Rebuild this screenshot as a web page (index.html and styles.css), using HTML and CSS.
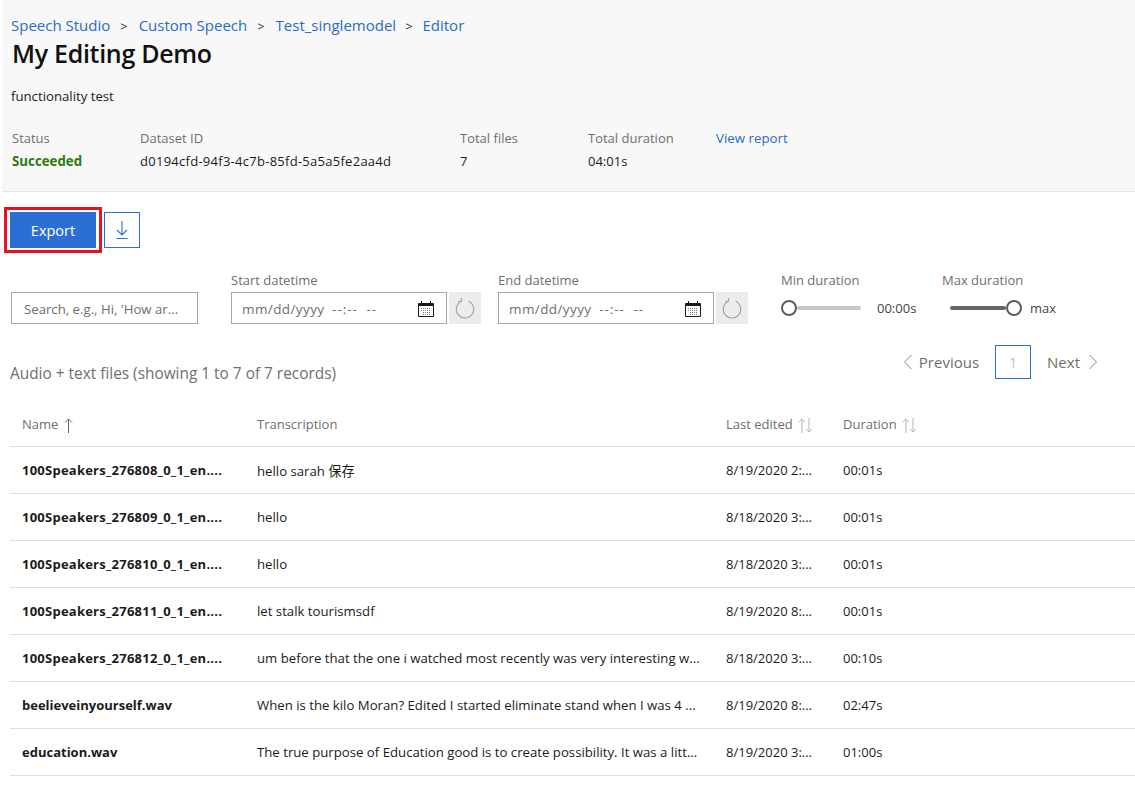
FILE: index.html
```html
<!DOCTYPE html>
<html lang="en">
<head>
  <meta charset="UTF-8">
  <title>My Editing Demo</title>
  <link rel="stylesheet" href="styles.css">
</head>
<body>

<!-- Dataset header -->
<header class="head">
  <nav class="crumbs">
    <a href="#">Speech Studio</a><span class="sep">&gt;</span>
    <a href="#">Custom Speech</a><span class="sep">&gt;</span>
    <a href="#">Test_singlemodel</a><span class="sep last">&gt;</span>
    <a href="#">Editor</a>
  </nav>
  <h1>My Editing Demo</h1>
  <p class="desc">functionality test</p>
  <div class="stats">
    <div class="stat s1"><span class="lbl">Status</span><span class="ok">Succeeded</span></div>
    <div class="stat s2"><span class="lbl">Dataset ID</span><span class="mono-ish">d0194cfd-94f3-4c7b-85fd-5a5a5fe2aa4d</span></div>
    <div class="stat s3"><span class="lbl">Total files</span><span>7</span></div>
    <div class="stat s4"><span class="lbl">Total duration</span><span>04:01s</span></div>
    <div class="stat"><a class="report" href="#">View report</a></div>
  </div>
</header>

<!-- Actions -->
<div class="actions">
  <div class="highlight"><button class="export">Export</button></div>
  <button class="download" aria-label="Download">
    <svg width="16" height="20" viewBox="0 0 16 20" fill="none" stroke="#2b6fd4" stroke-width="1.100"><path d="M8 1V15M3 10l5 5 5-5M2.500 18.500h11"/></svg>
  </button>
</div>

<!-- Filters -->
<div class="filters">
  <div class="search">Search, e.g., Hi, 'How ar...</div>
  <div class="field start">
    <label>Start datetime</label>
    <div class="date-row">
      <div class="date"><span>mm/dd/yyyy&nbsp; <span class="time">--:--&nbsp; --</span></span>
        <svg class="cal" width="18" height="17" viewBox="0 0 18 17" fill="none" stroke="#1a1a1a"><path d="M1.500 3.500h15v13h-15z"/><path d="M2 5h14" stroke-width="2"/><path d="M4.500 1v3M13.500 1v3"/><path d="M4 8.500h10M4 10.500h10M6 12.500h8M6 14.500h8" stroke="#777" stroke-dasharray="1 1"/></svg>
      </div>
      <button class="reset" aria-label="Reset"><svg width="22" height="22" viewBox="0 0 22 22" fill="none" stroke="#a6a6a6" stroke-width="1.200"><path d="M7.500 4.300A8.700 8.700 0 1 0 14.500 4.300M7.500 1v3.500H4"/></svg></button>
    </div>
  </div>
  <div class="field end">
    <label>End datetime</label>
    <div class="date-row">
      <div class="date"><span>mm/dd/yyyy&nbsp; <span class="time">--:--&nbsp; --</span></span>
        <svg class="cal" width="18" height="17" viewBox="0 0 18 17" fill="none" stroke="#1a1a1a"><path d="M1.500 3.500h15v13h-15z"/><path d="M2 5h14" stroke-width="2"/><path d="M4.500 1v3M13.500 1v3"/><path d="M4 8.500h10M4 10.500h10M6 12.500h8M6 14.500h8" stroke="#777" stroke-dasharray="1 1"/></svg>
      </div>
      <button class="reset" aria-label="Reset"><svg width="22" height="22" viewBox="0 0 22 22" fill="none" stroke="#a6a6a6" stroke-width="1.200"><path d="M7.500 4.300A8.700 8.700 0 1 0 14.500 4.300M7.500 1v3.500H4"/></svg></button>
    </div>
  </div>
  <div class="field min">
    <label>Min duration</label>
    <div class="slider-row">
      <div class="slider"><i class="thumb"></i><i class="track"></i></div>
      <span class="val">00:00s</span>
    </div>
  </div>
  <div class="field max">
    <label>Max duration</label>
    <div class="slider-row">
      <div class="slider right"><i class="track dark"></i><i class="thumb"></i></div>
      <span class="val">max</span>
    </div>
  </div>
</div>

<!-- Table title and paging -->
<div class="list-head">
  <h2>Audio + text files (showing 1 to 7 of 7 records)</h2>
  <div class="pager">
    <svg width="10" height="16" viewBox="0 0 10 16" fill="none" stroke="#8a8a8a"><path d="M8.500 1 1.500 8l7 7"/></svg>
    <span class="pg-text">Previous</span>
    <span class="pg-box">1</span>
    <span class="pg-text next">Next</span>
    <svg width="10" height="16" viewBox="0 0 10 16" fill="none" stroke="#8a8a8a"><path d="M1.500 1l7 7-7 7"/></svg>
  </div>
</div>

<table class="files">
  <colgroup>
    <col class="c-name"><col class="c-text"><col class="c-date"><col>
  </colgroup>
  <thead>
    <tr>
      <th>Name <svg class="arrow" width="9" height="15" viewBox="0 0 9 15" fill="none" stroke="#666"><path d="M4.500 15V1M1 4.500 4.500 1 8 4.500"/></svg></th>
      <th>Transcription</th>
      <th>Last edited <svg class="arrow" width="15" height="15" viewBox="0 0 15 15" fill="none" stroke="#b4b4b4"><path d="M4 15V1M1 4 4 1l3 3M11 0v14M8 11l3 3 3-3"/></svg></th>
      <th>Duration <svg class="arrow" width="15" height="15" viewBox="0 0 15 15" fill="none" stroke="#b4b4b4"><path d="M4 15V1M1 4 4 1l3 3M11 0v14M8 11l3 3 3-3"/></svg></th>
    </tr>
  </thead>
  <tbody>
    <tr><td class="fname wide">100Speakers_276808_0_1_en....</td><td>hello sarah 保存</td><td>8/19/2020 2:...</td><td>00:01s</td></tr>
    <tr><td class="fname wide">100Speakers_276809_0_1_en....</td><td>hello</td><td>8/18/2020 3:...</td><td>00:01s</td></tr>
    <tr><td class="fname wide">100Speakers_276810_0_1_en....</td><td>hello</td><td>8/18/2020 3:...</td><td>00:01s</td></tr>
    <tr><td class="fname wide">100Speakers_276811_0_1_en....</td><td>let stalk tourismsdf</td><td>8/19/2020 8:...</td><td>00:01s</td></tr>
    <tr><td class="fname wide">100Speakers_276812_0_1_en....</td><td>um before that the one i watched most recently was very interesting w...</td><td>8/18/2020 3:...</td><td>00:10s</td></tr>
    <tr><td class="fname">beelieveinyourself.wav</td><td>When is the kilo Moran? Edited I started eliminate stand when I was 4 ...</td><td>8/19/2020 8:...</td><td>02:47s</td></tr>
    <tr><td class="fname">education.wav</td><td>The true purpose of Education good is to create possibility. It was a litt...</td><td>8/19/2020 3:...</td><td>01:00s</td></tr>
  </tbody>
</table>

</body>
</html>
```

FILE: styles.css
```css
body {
  margin: 0;
  font-family: "Open Sans", "Noto Sans CJK SC", sans-serif;
  font-size: 13px;
  color: #1b1b1b;
  background-color: #fff;
}

a {
  color: #2b6bc9;
  text-decoration: none;
}

/* header */
.head {
  margin-left: 2px;
  height: 192px;
  box-sizing: border-box;
  padding: 15px 0 0 10px;
  background-color: #f8f8f8;
  border-bottom: 1px solid #e6e6e6;
}

.crumbs {
  font-size: 15px;
  line-height: 21px;
  height: 21px;
  margin-left: -1px;
  white-space: nowrap;
}

.crumbs .sep {
  margin: 0 7px 0 10px;
  color: #333;
  font-size: 13px;
}

.crumbs .sep.last {
  margin: 0 6px 0 9px;
}

h1 {
  margin: 0;
  font-size: 25px;
  line-height: 34px;
  font-weight: 600;
  letter-spacing: -0.3px;
  color: #111;
}

.desc {
  margin: 17px 0 0 -1px;
  line-height: 18px;
  font-size: 13.2px;
}

.stats {
  display: flex;
  margin-top: 24px;
}

.stat {
  display: flex;
  flex-direction: column;
  gap: 5px;
  line-height: 18px;
}

.s1 { width: 128px; }
.s2 { width: 320px; }
.s3 { width: 128px; }
.s4 { width: 128px; }

.lbl { color: #6f6f6f; }

.ok {
  color: #2b7a0b;
  font-weight: 700;
  font-size: 13.3px;
}

.report { font-size: 13.3px; }

.mono-ish { letter-spacing: 0.27px; }

/* actions */
.actions {
  display: flex;
  align-items: center;
  gap: 2px;
  margin: 15px 0 0 4px;
}

.highlight {
  border: 3px solid #e81123;
  padding: 2px 3px;
}

.export {
  display: block;
  width: 86px;
  height: 36px;
  border: none;
  background-color: #2b6fd4;
  color: #fff;
  font-family: inherit;
  font-size: 14.5px;
  padding: 0;
}

.download {
  display: flex;
  align-items: center;
  justify-content: center;
  width: 36px;
  height: 36px;
  padding: 0;
  background: #fff;
  border: 1px solid #2b6fd4;
}

/* filters */
.filters {
  display: flex;
  align-items: flex-end;
  margin: 19px 0 0 11px;
}

.search {
  width: 187px;
  height: 32px;
  box-sizing: border-box;
  border: 1px solid #a6a6a6;
  padding-left: 12px;
  line-height: 32px;
  color: #6f6f6f;
  font-size: 13.2px;
  white-space: nowrap;
}

.field label {
  display: block;
  height: 20px;
  line-height: 16px;
  color: #6f6f6f;
}

.start { margin-left: 33px; width: 267px; }
.end { width: 283px; }
.min { width: 161px; }
.max { width: 130px; }

.date-row {
  display: flex;
  gap: 2px;
}

.date {
  display: flex;
  align-items: center;
  justify-content: space-between;
  width: 216px;
  height: 32px;
  box-sizing: border-box;
  border: 1px solid #a6a6a6;
  padding: 1px 11px 0 10px;
  color: #6f6f6f;
  font-size: 13.5px;
  letter-spacing: 0.4px;
}

.time { letter-spacing: 0.9px; }

.reset {
  display: flex;
  align-items: center;
  justify-content: center;
  width: 32px;
  height: 32px;
  padding: 0;
  border: none;
  background-color: #ececec;
}

.slider-row {
  display: flex;
  align-items: center;
  height: 32px;
}

.slider {
  display: flex;
  align-items: center;
  width: 80px;
}

.slider.right {
  width: 72px;
  margin-left: 8px;
}

.thumb {
  flex: none;
  width: 16px;
  height: 16px;
  box-sizing: border-box;
  border: 2px solid #5e5e5e;
  border-radius: 50%;
  background: #fff;
}

.track {
  flex: 1;
  height: 4px;
  background-color: #c8c8c8;
  border-radius: 2px;
}

.track.dark { background-color: #666; }

.val {
  margin-left: 16px;
  color: #444;
}

.slider.right + .val { margin-left: 8px; }

/* list heading */
.list-head {
  display: flex;
  justify-content: space-between;
  margin: 20px 37px 0 10px;
  height: 58px;
}

h2 {
  margin: 19px 0 0;
  font-size: 15.4px;
  line-height: 22px;
  font-weight: 400;
  color: #6f6f6f;
}

.pager {
  display: flex;
  align-items: center;
  height: 34px;
  margin-top: 1px;
  color: #6f6f6f;
  font-size: 15px;
}

.pg-text { margin: 0 6px; }
.pg-text.next { margin-right: 8px; }

.pg-box {
  width: 36px;
  height: 34px;
  box-sizing: border-box;
  margin: 0 10px;
  border: 1px solid #2b6fd4;
  line-height: 32px;
  text-align: center;
  color: #c4c4c4;
}

/* table */
.files {
  margin-left: 10px;
  width: 1125px;
  table-layout: fixed;
  border-collapse: collapse;
}

.c-name { width: 235px; }
.c-text { width: 469px; }
.c-date { width: 117px; }

.files th {
  height: 44px;
  padding: 0 12px;
  text-align: left;
  font-weight: 400;
  color: #6f6f6f;
  border-bottom: 1px solid #e1dfe3;
  white-space: nowrap;
}

.files td {
  height: 46px;
  padding: 0 12px;
  border-bottom: 1px solid #e1dfe3;
  white-space: nowrap;
}

.files td:nth-child(2) { font-size: 13.2px; }

.files td.fname { font-weight: 700; }
.files td.wide { letter-spacing: 0.24px; }

.arrow {
  vertical-align: -4px;
  margin-left: 2px;
}
```
